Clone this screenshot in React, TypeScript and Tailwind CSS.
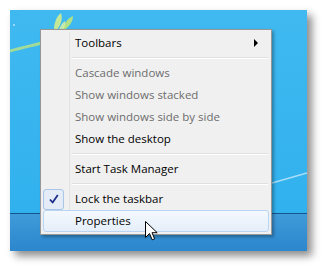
import { Fragment } from 'react';

type Item = { label: string; disabled?: boolean; checked?: boolean; hover?: boolean; submenu?: boolean } | 'sep';

const items: Item[] = [
  { label: 'Toolbars', submenu: true },
  'sep',
  { label: 'Cascade windows', disabled: true },
  { label: 'Show windows stacked', disabled: true },
  { label: 'Show windows side by side', disabled: true },
  { label: 'Show the desktop' },
  'sep',
  { label: 'Start Task Manager' },
  'sep',
  { label: 'Lock the taskbar', checked: true },
  { label: 'Properties', hover: true },
];

function Check() {
  return (
    <svg width="10" height="10" viewBox="0 0 10 10">
      <path d="M1 5.5 L3.6 8.5 L8.8 1" fill="none" stroke="#1b2c8a" strokeWidth="1.8" strokeLinejoin="round" />
    </svg>
  );
}

function Cursor() {
  return (
    <svg width="13" height="20" viewBox="0 0 13 20" className="absolute left-[135px] top-[211px]">
      <path
        d="M0.5 0.5 L0.5 16.5 L4.5 12.5 L7.2 18.8 L9.6 17.8 L7 11.7 L12.2 11.7 Z"
        fill="#fff"
        stroke="#000"
        strokeWidth="1"
        strokeLinejoin="miter"
      />
    </svg>
  );
}

function Wallpaper() {
  return (
    <svg width="297" height="203" viewBox="0 0 297 203" className="absolute left-0 top-0">
      <path d="M0 41 C10 38 20 36 32 33" stroke="#b3e08a" strokeWidth="3" fill="none" opacity="0.85" />
      <path d="M44 20 C44 12 47 6 51 3 C53 9 51 15 46 21 Z" fill="#d3ec8e" opacity="0.9" />
      <path d="M52 20 C54 13 58 8 63 6 C63 12 59 17 53 21 Z" fill="#bde57a" opacity="0.9" />
      <path d="M48 22 C50 16 52 13 55 11 C56 16 53 20 49 23 Z" fill="#e0f2a6" opacity="0.8" />
      <path d="M262 173 L297 163" stroke="#c6eafc" strokeWidth="1.5" opacity="0.8" />
      <circle cx="4" cy="15" r="1" fill="#dff3fd" opacity="0.7" />
    </svg>
  );
}

export default function App() {
  return (
    <div className="w-[325px] h-[269px] bg-white pl-[10px] pt-[10px]" style={{ fontFamily: '"Open Sans", "Noto Sans", sans-serif' }}>
      <div className="relative w-[297px] h-[241px] flex flex-col shadow-[5px_5px_8px_rgba(0,0,0,0.45)]">
        <div className="relative flex-1 bg-gradient-to-b from-[#40b9f0] to-[#30b1ee] overflow-hidden">
          <Wallpaper />
        </div>
        <div className="h-[38px] border-t border-[#16548e] bg-gradient-to-b from-[#409bda] to-[#2b86cc]" />

        <div className="absolute left-[30px] top-[19px] w-[232px] border border-[#979797] bg-[#f0f0f0] p-[2px] shadow-[2px_2px_3px_rgba(0,0,0,0.3)]">
          <div className="absolute left-[28px] top-[2px] bottom-[2px] w-[2px] border-l border-[#e2e3e3] bg-[#f0f0f0] border-r-white" />
          {items.map((it, i) =>
            it === 'sep' ? (
              <div key={i} className="relative h-[8px] flex items-center pl-[29px] pr-[1px]">
                <div className="w-full h-[2px] border-t border-[#e0e0e0] border-b border-b-white" />
              </div>
            ) : (
              <Fragment key={i}>
                <div
                  className={`relative h-[22px] flex items-center text-[11.5px] ${
                    it.hover
                      ? 'rounded-[3px] border border-[#b8d6f4] bg-gradient-to-b from-[#f4f8fd] to-[#e5eefa]'
                      : 'border border-transparent'
                  }`}
                >
                  <div className="w-[26px] h-full flex items-center">
                    {it.checked && (
                      <div className="w-[21px] h-[21px] -ml-px rounded-[3px] border border-[#a9c6e6] bg-[#e4ecf7] flex items-center justify-center">
                        <Check />
                      </div>
                    )}
                  </div>
                  <span className={`pl-[5px] leading-none ${it.disabled ? 'text-[#6d6d6d]' : 'text-black'}`}>{it.label}</span>
                  {it.submenu && (
                    <span className="ml-auto mr-[10px] w-0 h-0 border-y-[4px] border-y-transparent border-l-[4px] border-l-black" />
                  )}
                </div>
              </Fragment>
            )
          )}
        </div>
        <Cursor />
      </div>
    </div>
  );
}
